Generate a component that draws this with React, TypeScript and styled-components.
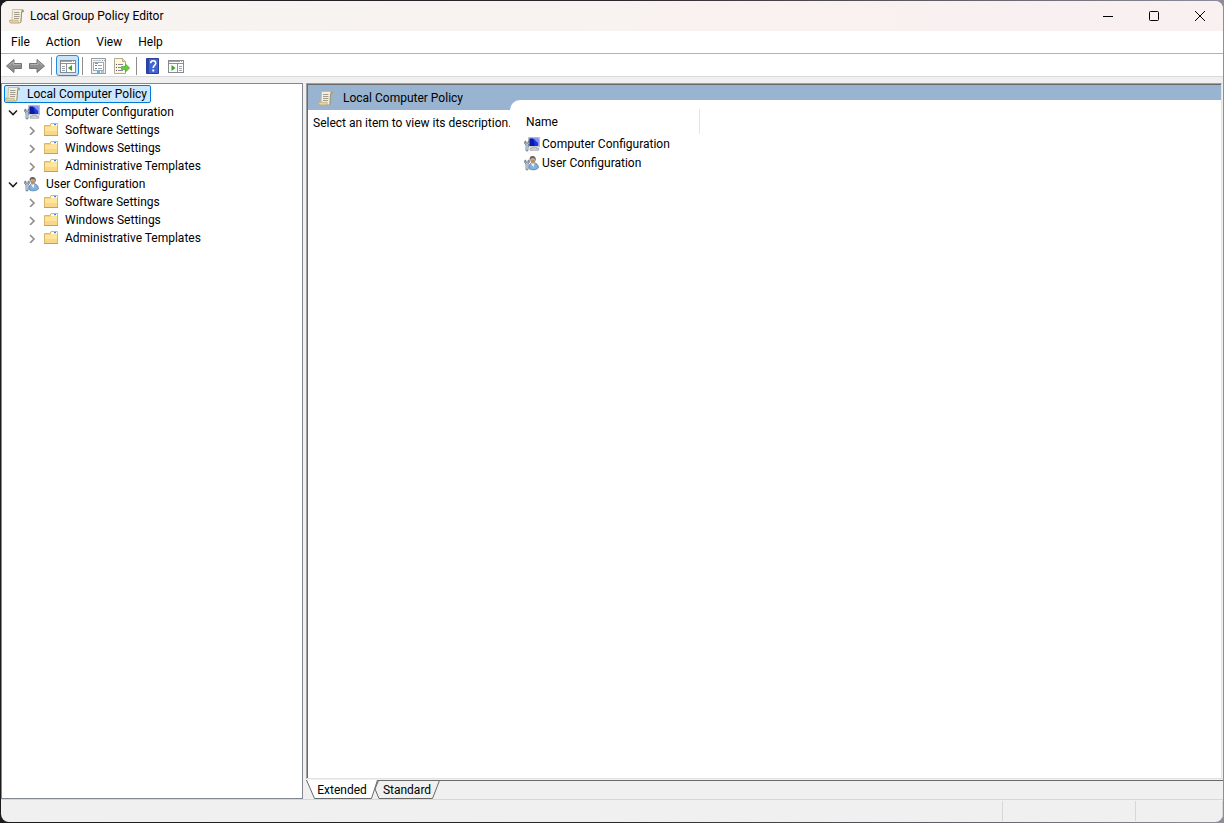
import React from "react";
import styled, { createGlobalStyle } from "styled-components";

const GlobalStyle = createGlobalStyle`
  * { box-sizing: border-box; }
  html, body { margin: 0; padding: 0; }
  body {
    font-family: Roboto, "Segoe UI", sans-serif;
    font-size: 12px;
    line-height: 18px;
    color: #000;
    background: #1c1a1d;
  }
  button { font: inherit; color: inherit; border: 0; padding: 0; margin: 0; background: none; }
  ul { list-style: none; margin: 0; padding: 0; }
  svg { display: block; flex: none; }
`;

const Desktop = styled.div`
  display: flex;
  height: 100vh;
  padding: 1px;
  background: linear-gradient(to right, #1b1a1d 0%, #2b2629 50%, #8f8d9b 100%);
`;

const Window = styled.main`
  flex: 1;
  min-width: 0;
  display: flex;
  flex-direction: column;
  overflow: hidden;
  border-radius: 8px;
  background: #f0f0f0;
`;

const TitleBar = styled.header`
  display: flex;
  align-items: center;
  height: 30px;
  padding-left: 8px;
  background: linear-gradient(to right, #f7f4f1, #f9f0f0);
`;

const Title = styled.h1`
  flex: 1;
  margin: 0 0 0 5px;
  font-size: 12px;
  font-weight: 400;
`;

const CaptionButton = styled.button`
  display: grid;
  place-items: center;
  width: 46px;
  height: 30px;
`;

const MenuBar = styled.nav`
  display: flex;
  height: 23px;
  padding-left: 2px;
  background: #fff;
  border-bottom: 1px solid #b2b1bb;
`;

const MenuItem = styled.button`
  padding: 0 8px;
`;

const ToolBar = styled.div`
  display: flex;
  align-items: center;
  height: 23px;
  padding: 1px 0 0 1px;
  background: #fff;
  border-bottom: 1px solid #d9d9d9;
`;

const ToolButton = styled.button<{ $pressed?: boolean }>`
  display: grid;
  place-items: center;
  width: 23px;
  height: 21px;
  border: 1px solid ${(p) => (p.$pressed ? "#2a8ad8" : "transparent")};
  border-radius: 3px;
  background: ${(p) => (p.$pressed ? "#cce4f7" : "transparent")};
`;

const Separator = styled.span`
  width: 1px;
  height: 18px;
  margin: 0 4px 0 3px;
  background: #8d8d8d;
`;

const Panes = styled.div`
  flex: 1;
  min-height: 0;
  display: flex;
  gap: 3px;
  padding-top: 6px;
`;

const TreePane = styled.nav`
  flex: 0 0 302px;
  padding: 1px 2px;
  background: #fff;
  border: 1px solid #828790;
`;

const TreeRow = styled.div<{ $level: number; $selected?: boolean }>`
  display: flex;
  align-items: center;
  width: max-content;
  height: 18px;
  margin-left: ${(p) => (p.$level === 0 ? 0 : p.$level * 19 - 17)}px;
  padding-right: 3px;
  border: 1px solid ${(p) => (p.$selected ? "#0078d7" : "transparent")};
  border-radius: 2px;
  background: ${(p) => (p.$selected ? "#cce8ff" : "transparent")};
`;

const Expander = styled.button`
  display: grid;
  place-items: center;
  width: 12px;
  height: 16px;
  margin-right: 5px;
`;

const TreeLabel = styled.span`
  margin-left: 6px;
  white-space: nowrap;
`;

const ResultColumn = styled.section`
  flex: 1;
  min-width: 0;
  display: flex;
  flex-direction: column;
`;

const ResultPane = styled.div`
  flex: 1;
  min-height: 0;
  display: flex;
  margin-right: 1px;
  padding: 1px 0 0 1px;
  background: #fff;
  border: 1px solid;
  border-color: #a0a0a0 #e3e3e3 #e3e3e3 #a0a0a0;
  box-shadow: inset 1px 1px #696969;
`;

const Description = styled.div`
  flex: 0 0 202px;
  min-width: 0;
`;

const DescriptionHeader = styled.h2`
  display: flex;
  align-items: center;
  gap: 9px;
  height: 25px;
  margin: 0;
  padding-left: 10px;
  font-size: 12px;
  font-weight: 400;
  background: #99b4d1;
`;

const DescriptionText = styled.p`
  margin: 4px 0 0 5px;
  white-space: nowrap;
`;

const ListFrame = styled.div`
  flex: 1;
  display: flex;
  padding-top: 15px;
  background: #99b4d1;
`;

const ListArea = styled.div`
  flex: 1;
  padding: 9px 0 0 14px;
  border-top-left-radius: 10px;
  background: #fff;
`;

const ItemTable = styled.table`
  width: 176px;
  border-collapse: collapse;

  th {
    height: 25px;
    padding: 0 2px;
    font-weight: 400;
    text-align: left;
    border-right: 1px solid #e5e5e5;
  }
  td { height: 19px; padding: 0; }
`;

const ItemCell = styled.div`
  display: flex;
  align-items: center;
  gap: 2px;
  white-space: nowrap;
`;

const TabStrip = styled.div`
  display: flex;
  height: 19px;
  margin-top: 1px;
  border-top: 1px solid #696969;
`;

const Tab = styled.button<{ $width: number; $front?: boolean }>`
  position: relative;
  z-index: ${(p) => (p.$front ? 1 : 0)};
  width: ${(p) => p.$width}px;
  height: 19px;
  margin: -1px -4px 0 0;
  text-align: center;
`;

const TabShape = styled.svg`
  position: absolute;
  inset: 0;
`;

const TabText = styled.span`
  position: relative;
`;

const StatusBar = styled.footer`
  display: flex;
  height: 23px;
  border-top: 1px solid #d7d7d7;
`;

const StatusCell = styled.div<{ $width?: number }>`
  flex: ${(p) => (p.$width ? `0 0 ${p.$width}px` : "1")};
  margin: 1px 0;
  border-right: 1px solid #d7d7d7;
`;

const ScrollIcon = () => (
  <svg width="16" height="16" viewBox="0 0 16 16">
    <path d="M3.500 1.500H13c1.300 0 1.900 1 1.600 2.500h-2l-.6 9.500c-.1 1-.7 1.500-1.700 1.500H2.300c-1.500 0-1.900-1.300-1.500-2.700H3z" fill="#f6efda" stroke="#c2b792" strokeWidth=".8" />
    <path d="M12.500 4c-.2-1.600.1-2.400 1-2.400s1.500.9 1.200 2.400z" fill="#a8946a" />
    <path d="M.8 12.300h8.400c-.2 1.500.2 2.300 1 2.600H2.300C.9 14.900.5 13.700.8 12.300z" fill="#e5d6a9" stroke="#b09d72" strokeWidth=".6" />
    <path d="M12.600 4 12 13.500c-.1.800-.6 1.300-1.200 1.400" fill="none" stroke="#8f8468" strokeWidth=".8" />
    <path d="M5 4.500h5.500M5 6.500h5.500M5 8.500h5.500M5 10.500h5" stroke="#a19c90" />
  </svg>
);

const FolderIcon = () => (
  <svg width="16" height="16" viewBox="0 0 16 16">
    <path d="M1.500 3.500h5.500l1-2h6.500v12h-13z" fill="#f4d488" stroke="#d9b768" />
    <path d="M8.500 2h5.500v2H8z" fill="#fff" />
    <path d="M11 2h2v1.200h-2z" fill="#3f86d6" />
    <path d="M2 5h5.500l1-1H14v9H2z" fill="#ffe49b" />
    <path d="M2 9h12v4H2z" fill="#f8d789" />
    <path d="M1 13.500h14" stroke="#c8a14e" />
  </svg>
);

const Wrench = () => (
  <g>
    <path d="M.7 5.500v2.300L2 9v5.300c0 1.100 2 1.100 2 0V9l1.300-1.200V5.500L4.200 5v2H1.800V5z" fill="#b3c3d2" stroke="#4f6275" strokeWidth=".7" />
    <path d="M3 9.300v4.500" stroke="#e8f2fa" strokeWidth=".7" />
  </g>
);

const ComputerIcon = () => (
  <svg width="16" height="16" viewBox="0 0 16 16">
    <path d="M4.500 1.500h11V11h-11z" fill="#eceef1" stroke="#a9aeb6" strokeWidth=".8" />
    <path d="M5.500 2.500h9V10h-9z" fill="#1f37dc" />
    <path d="M5.500 2.500H9l2 7.500H5.500z" fill="#0b1aa8" />
    <path d="M9.500 2.500h5v5z" fill="#7f9cf2" />
    <path d="M8 11.300h4.500v1.200h2.300v1.800H6v-1.800h2z" fill="#cfd2d7" stroke="#8e939b" strokeWidth=".6" />
    <Wrench />
  </svg>
);

const UserIcon = () => (
  <svg width="16" height="16" viewBox="0 0 16 16">
    <path d="M5 13.500C4.600 10 6 7.800 9 7.800c3.600 0 5.500 2 5.300 5.200-1.700 1.900-6.800 2.600-9.300.5z" fill="#84b2df" stroke="#4f7cab" strokeWidth=".8" />
    <path d="m6.800 8.200 2.700 4L10.500 8z" fill="#f0f6fb" />
    <path d="M6.200 4.200C6.200 6.800 7.200 8.600 8.800 8.600s2.700-1.800 2.700-4.400z" fill="#b98f6c" />
    <path d="M5.800 5.200C5.100 2.300 6.400.9 8.400.9c2.500 0 3.900 1.600 3.400 5.200l-1-2.300-3.400-.4z" fill="#6b625a" />
    <Wrench />
  </svg>
);

const Arrow = ({ right }: { right?: boolean }) => (
  <svg width="16" height="16" viewBox="0 0 16 16">
    <path
      d={right ? "M.5 5.500H8V1.500L15.500 8 8 14.500v-4H.5z" : "M15.500 5.500H8V1.500L.5 8 8 14.500v-4h7.500z"}
      fill="#8f8f8f"
      stroke="#757575"
    />
    <path d={right ? "M1.500 6.500H9v-3L13.500 7.500" : "M14.500 6.500H7.500v-2.500L3 7.500"} fill="none" stroke="#b5b5b5" />
  </svg>
);

const PanelIcon = ({ right }: { right?: boolean }) => (
  <svg width="16" height="16" viewBox="0 0 16 16" shapeRendering="crispEdges">
    <path d="M.5 2.500h15v12H.5z" fill="#fff" stroke="#858b92" />
    <path d="M1 3h14v1H1z" fill="#9fa6ae" />
    <path d="M1 5h14v1H1z" fill="#8c9299" />
    <path d="M12 3h1v1h-1zM14 3h1v1h-1z" fill="#fff" />
    <path d={right ? "M9.500 6v8" : "M6.500 6v8"} stroke="#8c9299" />
    <path d={right ? "M11 8.500h3M11 10.500h3M11 12.500h3" : "M2 8.500h3M2 10.500h3M2 12.500h3"} stroke="#9aa1a9" />
    <path d={right ? "M3.500 7v6l4-3z" : "M12 7v6l-4-3z"} fill="#37a51f" shapeRendering="auto" />
  </svg>
);

const PropertiesIcon = () => (
  <svg width="16" height="16" viewBox="0 0 16 16" shapeRendering="crispEdges">
    <path d="M.5.500h14v15H.5z" fill="#f1f3f5" stroke="#9a9fa5" />
    <path d="M2 2h8v1H2z" fill="#c4c9cf" />
    <path d="M11 2h1v1h-1zM13 2h1v1h-1z" fill="#9aa0a6" />
    <path d="M2.500 4.500h10v8h-10z" fill="#fff" stroke="#a2a9b1" />
    <path d="M4 5h3v1H4z" fill="#8c949d" />
    <path d="M4 7h2v1H4zM4 10h2v1H4z" fill="#4f87bd" />
    <path d="M7 7.500h4M7 10.500h4" stroke="#9aa1a9" />
    <path d="M6 13h3v2H6z" fill="#45bfe8" />
    <path d="M10 13h3v2h-3z" fill="#bcc2c8" />
  </svg>
);

const ExportIcon = () => (
  <svg width="16" height="16" viewBox="0 0 16 16">
    <path d="M.5.500h8l3 3v12H.5z" fill="#fdf8dc" stroke="#b3ab8c" />
    <path d="M8.500.500v3h3" fill="#eee5bb" stroke="#b3ab8c" />
    <path d="M2 6.500h1M2 9.500h1M2 12.500h1" stroke="#555" />
    <path d="M4 6.500h5M4 9.500h3M4 12.500h5" stroke="#8a83a6" />
    <path d="M7.500 8.500h4V6l4.200 4-4.200 4v-2.500h-4z" fill="#63cd42" stroke="#4cab33" strokeWidth=".7" />
  </svg>
);

const HelpIcon = () => (
  <svg width="16" height="16" viewBox="0 0 16 16">
    <path d="M1.500.5h12v15h-12z" fill="#4164cf" stroke="#2a3f9b" />
    <path d="M2 1h2v14H2z" fill="#2746ae" />
    <path d="M5.700 5.200c0-3.200 5-3.200 5 0 0 2.200-2.500 2.100-2.500 4.800" fill="none" stroke="#fff" strokeWidth="1.600" />
    <path d="M7.300 11.500h1.900v1.900H7.300z" fill="#fff" />
  </svg>
);

const Chevron = ({ open }: { open?: boolean }) => (
  <svg width="10" height="10" viewBox="0 0 10 10" fill="none" strokeWidth="1.600">
    {open ? <path d="m1 3.500 4 4 4-4" stroke="#222" /> : <path d="m3 2 4 4-4 4" stroke="#8c8c8c" />}
  </svg>
);

type NodeData = { label: string; icon: React.ReactNode; children?: NodeData[] };

const settings = (): NodeData[] =>
  ["Software Settings", "Windows Settings", "Administrative Templates"].map((label) => ({
    label,
    icon: <FolderIcon />,
  }));

const tree: NodeData = {
  label: "Local Computer Policy",
  icon: <ScrollIcon />,
  children: [
    { label: "Computer Configuration", icon: <ComputerIcon />, children: settings() },
    { label: "User Configuration", icon: <UserIcon />, children: settings() },
  ],
};

const TreeNode = ({ node, level = 0 }: { node: NodeData; level?: number }) => (
  <li>
    <TreeRow $level={level} $selected={level === 0}>
      {level > 0 && (
        <Expander aria-label={`Toggle ${node.label}`}>
          <Chevron open={!!node.children} />
        </Expander>
      )}
      {node.icon}
      <TreeLabel>{node.label}</TreeLabel>
    </TreeRow>
    {node.children && (
      <ul>
        {node.children.map((child) => (
          <TreeNode key={child.label} node={child} level={level + 1} />
        ))}
      </ul>
    )}
  </li>
);

export default function App() {
  return (
    <Desktop>
      <GlobalStyle />
      <Window>
        <TitleBar>
          <ScrollIcon />
          <Title>Local Group Policy Editor</Title>
          <CaptionButton aria-label="Minimize">
            <svg width="12" height="12" viewBox="0 0 12 12"><path d="M1 6.500h10" stroke="#000" /></svg>
          </CaptionButton>
          <CaptionButton aria-label="Maximize">
            <svg width="12" height="12" viewBox="0 0 12 12"><rect x="1.500" y="1.500" width="9" height="9" rx="1" fill="none" stroke="#000" /></svg>
          </CaptionButton>
          <CaptionButton aria-label="Close">
            <svg width="12" height="12" viewBox="0 0 12 12"><path d="m1 1 10 10M11 1 1 11" stroke="#000" /></svg>
          </CaptionButton>
        </TitleBar>
        <MenuBar>
          {["File", "Action", "View", "Help"].map((name) => (
            <MenuItem key={name}>{name}</MenuItem>
          ))}
        </MenuBar>
        <ToolBar>
          <ToolButton aria-label="Back"><Arrow /></ToolButton>
          <ToolButton aria-label="Forward"><Arrow right /></ToolButton>
          <Separator />
          <ToolButton aria-label="Show or hide console tree" $pressed><PanelIcon /></ToolButton>
          <Separator />
          <ToolButton aria-label="Properties"><PropertiesIcon /></ToolButton>
          <ToolButton aria-label="Export list"><ExportIcon /></ToolButton>
          <Separator />
          <ToolButton aria-label="Help"><HelpIcon /></ToolButton>
          <ToolButton aria-label="Show or hide action pane"><PanelIcon right /></ToolButton>
        </ToolBar>
        <Panes>
          <TreePane>
            <ul>
              <TreeNode node={tree} />
            </ul>
          </TreePane>
          <ResultColumn>
            <ResultPane>
              <Description>
                <DescriptionHeader><ScrollIcon />Local Computer Policy</DescriptionHeader>
                <DescriptionText>Select an item to view its description.</DescriptionText>
              </Description>
              <ListFrame>
                <ListArea>
                  <ItemTable>
                    <thead>
                      <tr><th scope="col">Name</th></tr>
                    </thead>
                    <tbody>
                      <tr><td><ItemCell><ComputerIcon />Computer Configuration</ItemCell></td></tr>
                      <tr><td><ItemCell><UserIcon />User Configuration</ItemCell></td></tr>
                    </tbody>
                  </ItemTable>
                </ListArea>
              </ListFrame>
            </ResultPane>
            <TabStrip>
              <Tab $width={72} $front>
                <TabShape width="72" height="19" viewBox="0 0 72 19">
                  <path d="M.5 0 8.500 18.500h57L71.500 0" fill="#fff" stroke="#696969" />
                </TabShape>
                <TabText>Extended</TabText>
              </Tab>
              <Tab $width={66}>
                <TabShape width="66" height="19" viewBox="0 0 66 19">
                  <path d="M4.500.5 1 9l4 9.500h53.500L65.500.5z" fill="#f0f0f0" stroke="#696969" />
                </TabShape>
                <TabText>Standard</TabText>
              </Tab>
            </TabStrip>
          </ResultColumn>
        </Panes>
        <StatusBar>
          <StatusCell />
          <StatusCell $width={133} />
          <StatusCell $width={87} />
        </StatusBar>
      </Window>
    </Desktop>
  );
}
